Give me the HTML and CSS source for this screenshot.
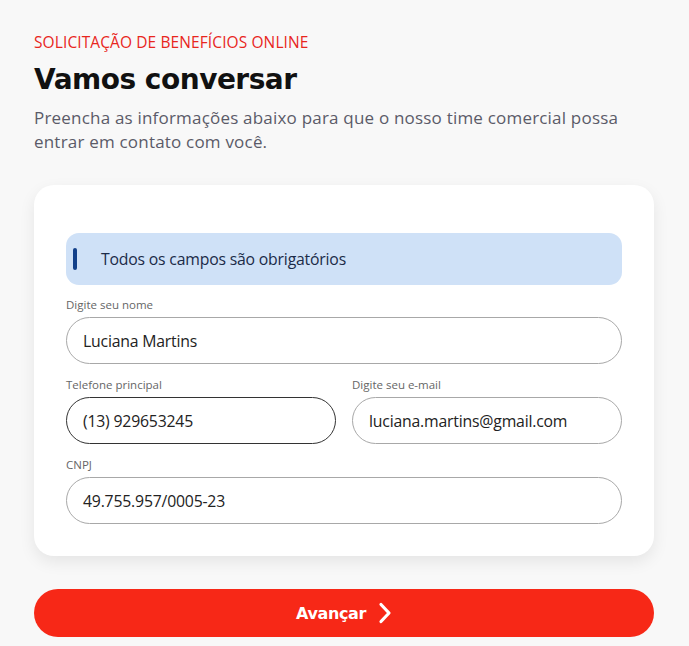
FILE: index.html
```html
<!DOCTYPE html>
<html lang="pt-BR">

<head>
    <meta charset="UTF-8">
    <meta name="viewport" content="width=device-width, initial-scale=1.0">
    <title>Solicitação de benefícios</title>
    <link rel="stylesheet" href="styles.css">
</head>

<body>
    <div class="page">
        <p class="eyebrow">SOLICITAÇÃO DE BENEFÍCIOS ONLINE</p>
        <h1 class="title">Vamos conversar</h1>
        <p class="intro">Preencha as informações abaixo para que o nosso time comercial possa entrar em contato com você.</p>

        <form class="card">
            <div class="notice">
                <span class="noticeBar"></span>
                Todos os campos são obrigatórios
            </div>
            <div class="field">
                <label class="label">Digite seu nome</label>
                <div class="input">Luciana Martins</div>
            </div>
            <div class="row">
                <div class="field">
                    <label class="label">Telefone principal</label>
                    <div class="input focused">(13) 929653245</div>
                </div>
                <div class="field">
                    <label class="label">Digite seu e-mail</label>
                    <div class="input">luciana.martins@gmail.com</div>
                </div>
            </div>
            <div class="field">
                <label class="label">CNPJ</label>
                <div class="input">49.755.957/0005-23</div>
            </div>
        </form>

        <button class="next" type="button">
            Avançar
            <svg width="14" height="22" viewBox="0 0 14 22">
                <path d="M3 2.5 L11 11 L3 19.5" fill="none" stroke="#fff" stroke-width="3.2" stroke-linecap="round" stroke-linejoin="round" />
            </svg>
        </button>
    </div>
</body>

</html>
```

FILE: styles.css
```css
* {
    box-sizing: border-box;
}

body {
    margin: 0;
    background: #f8f8f8;
    font-family: "Open Sans", sans-serif;
}

.page {
    padding: 32px 35px 0 34px;
}

.eyebrow {
    margin: 0;
    color: #e8261d;
    font-size: 15.5px;
    line-height: 20px;
    letter-spacing: 0.1px;
}

.title {
    margin: 8px 0 0;
    font-family: "DejaVu Sans", sans-serif;
    font-size: 28px;
    line-height: 40px;
    font-weight: bold;
    color: #111;
    letter-spacing: -0.5px;
}

.intro {
    margin: 6px 0 0;
    color: #5b5b68;
    font-size: 17px;
    line-height: 24px;
    letter-spacing: 0.2px;
    max-width: 590px;
}

.card {
    margin-top: 31px;
    background: #fff;
    border-radius: 20px;
    box-shadow: 0 6px 16px rgba(0, 0, 0, 0.08);
    padding: 48px 32px 32px;
}

.notice {
    display: flex;
    align-items: center;
    height: 52px;
    padding-left: 7px;
    background: #cfe1f7;
    border-radius: 13px;
    color: #1b2b48;
    font-size: 15.8px;
    letter-spacing: -0.2px;
    margin-bottom: 12px;
}

.noticeBar {
    width: 4px;
    height: 22px;
    background: #12408a;
    border-radius: 2px;
    margin-right: 24px;
}

.field {
    flex: 1;
    margin-bottom: 13px;
}

.row {
    display: flex;
    gap: 16px;
}

.label {
    display: block;
    font-size: 11.5px;
    line-height: 16px;
    color: #666;
    margin-bottom: 4px;
}

.input {
    height: 47px;
    border: 1px solid #a8a8a8;
    border-radius: 24px;
    padding: 0 16px;
    display: flex;
    align-items: center;
    font-size: 15.8px;
    color: #222;
    letter-spacing: -0.2px;
}

.focused {
    border-color: #333;
}

.card .field:last-child {
    margin-bottom: 0;
}

.next {
    margin-top: 33px;
    width: 100%;
    height: 48px;
    border: none;
    border-radius: 24px;
    background: #f72817;
    color: #fff;
    font-family: "DejaVu Sans", sans-serif;
    font-weight: bold;
    font-size: 16px;
    letter-spacing: -0.4px;
    display: flex;
    align-items: center;
    justify-content: center;
    gap: 12px;
}
```
